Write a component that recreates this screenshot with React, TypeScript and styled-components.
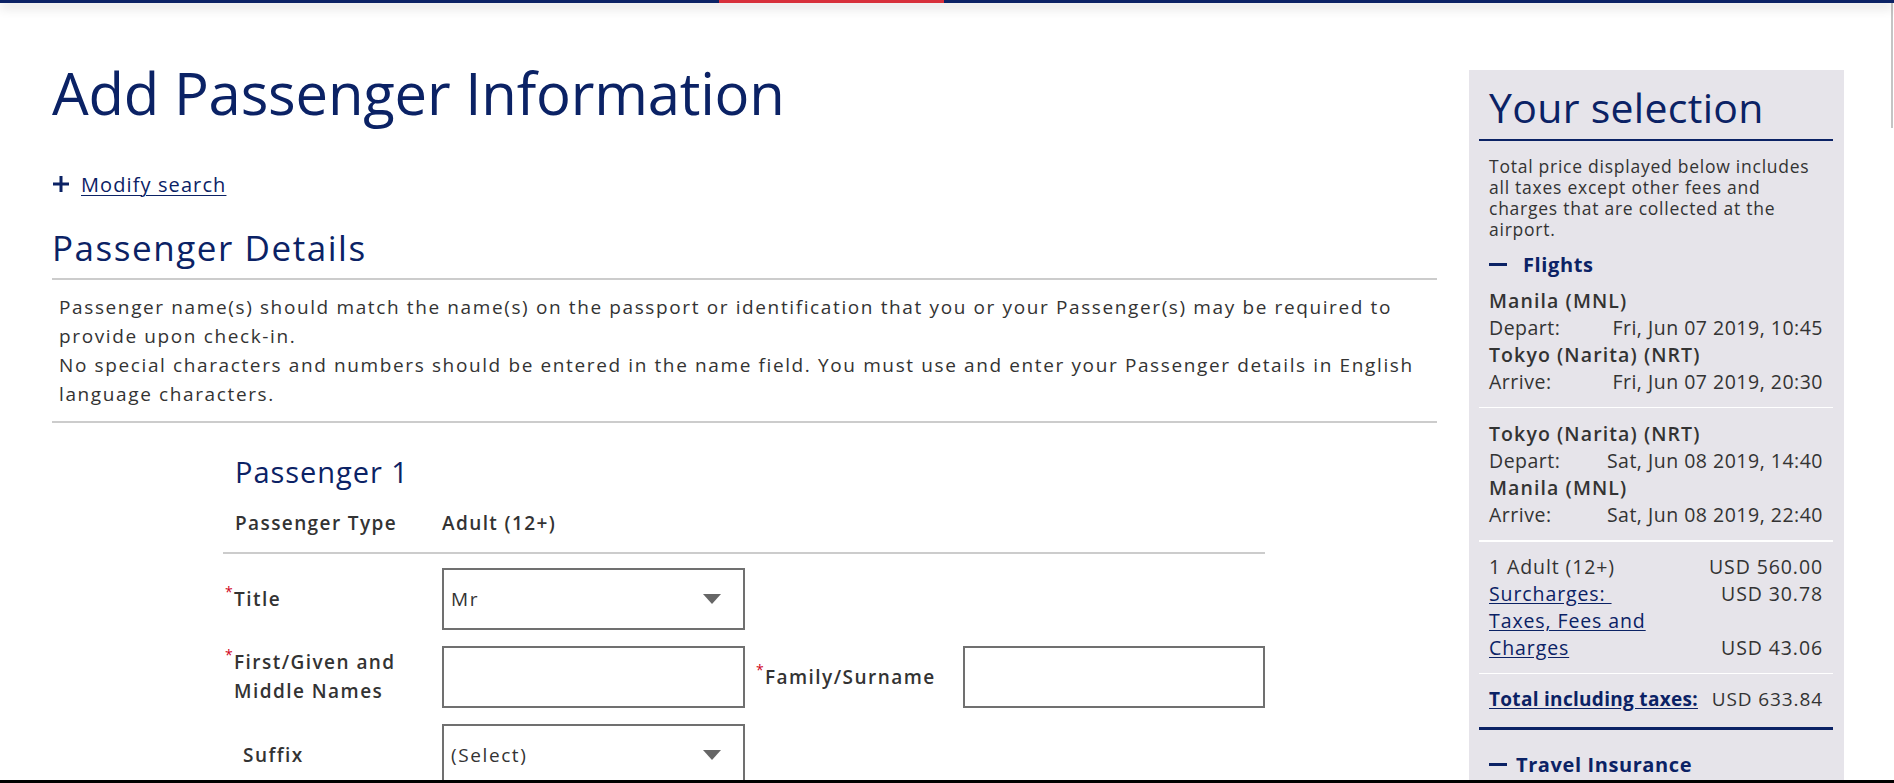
import React from "react";
import styled, { createGlobalStyle } from "styled-components";

const NAVY = "#0b2265";
const TEXT = "#333333";

const Global = createGlobalStyle`
  html, body { margin: 0; padding: 0; background: #fff; overflow: hidden; }
  body { font-family: "Open Sans", "Liberation Sans", sans-serif; color: ${TEXT}; }
  * { box-sizing: border-box; }
`;

const TopBar = styled.div`
  height: 3px;
  background: ${NAVY};
  display: flex;
  box-shadow: 0 3px 12px rgba(0, 0, 0, 0.3);
  position: relative;
  z-index: 2;
`;

const RedSegment = styled.div`
  margin-left: 719px;
  width: 225px;
  background: #d7303b;
`;

const Page = styled.div`
  display: flex;
  gap: 32px;
  padding: 67px 50px 0 52px;
`;

const Main = styled.main`
  width: 1385px;
  flex: none;
`;

const Heading = styled.h1`
  margin: 0;
  font-size: 58px;
  line-height: 46px;
  font-weight: 400;
  color: ${NAVY};
  letter-spacing: -0.2px;
`;

const ModifyRow = styled.div`
  display: flex;
  align-items: center;
  gap: 11px;
  margin-top: 56px;
  height: 24px;
`;

const PlusIcon = styled.svg`
  width: 18px;
  height: 18px;
  flex: none;
`;

const Link = styled.a`
  color: ${NAVY};
  font-size: 20px;
  text-decoration: underline;
  text-underline-offset: 3px;
  text-decoration-thickness: 1px;
  letter-spacing: 1.1px;
`;

const SectionTitle = styled.h2`
  margin: 32px 0 0;
  font-size: 35px;
  line-height: 40px;
  font-weight: 400;
  color: ${NAVY};
  letter-spacing: 1.55px;
  padding-bottom: 10px;
  border-bottom: 2px solid #cccccc;
`;

const Notice = styled.div`
  padding: 13px 7px 12px;
  font-size: 19px;
  line-height: 29px;
  letter-spacing: 1.62px;
  border-bottom: 2px solid #cccccc;
  color: ${TEXT};
`;

const NoticeLine = styled.p`
  margin: 0;
`;

const Form = styled.section`
  margin-left: 171px;
  width: 1042px;
`;

const PassengerTitle = styled.h3`
  margin: 32px 0 0 12px;
  font-size: 29px;
  line-height: 34px;
  font-weight: 400;
  color: ${NAVY};
  letter-spacing: 0.95px;
`;

const TypeRow = styled.div`
  display: flex;
  padding: 21px 0 16px 12px;
  border-bottom: 2px solid #cccccc;
  font-size: 19px;
  line-height: 26px;
  font-weight: 600;
  letter-spacing: 1.4px;
`;

const TypeLabel = styled.span`
  width: 207px;
`;

const FieldGrid = styled.div`
  display: grid;
  grid-template-columns: 219px 303px 218px 302px;
  grid-auto-rows: 62px;
  row-gap: 16px;
  margin-top: 14px;
  align-items: center;
`;

const Label = styled.label<{ $indent?: number; $hang?: number }>`
  font-size: 19px;
  line-height: 29px;
  font-weight: 600;
  letter-spacing: 1.45px;
  color: ${TEXT};
  padding-left: ${(p) => p.$indent ?? 11}px;
  text-indent: -${(p) => p.$hang ?? 9}px;
`;

const Req = styled.span`
  display: inline-block;
  width: 9px;
  text-indent: 0;
  color: #d0021b;
  font-size: 14px;
  font-weight: 400;
  vertical-align: top;
  line-height: 14px;
  letter-spacing: 0;
`;

const Box = styled.div`
  height: 62px;
  border: 2px solid #707070;
  background: #fff;
  display: flex;
  align-items: center;
  padding: 0 22px 0 7px;
  font-size: 19px;
  letter-spacing: 1.6px;
  color: ${TEXT};
`;

const BoxText = styled.span`
  flex: 1;
`;

const Caret = styled.span`
  width: 0;
  height: 0;
  border-left: 9px solid transparent;
  border-right: 9px solid transparent;
  border-top: 10px solid #666;
`;

const Sidebar = styled.aside`
  width: 375px;
  flex: none;
  background: #e6e4ea;
  padding: 0 11px 0 10px;
  height: 720px;
`;

const SideTitle = styled.h2`
  margin: 0;
  padding: 13px 10px 8px;
  font-size: 41px;
  line-height: 48px;
  font-weight: 400;
  color: ${NAVY};
  letter-spacing: 0.3px;
  border-bottom: 2px solid ${NAVY};
`;

const SideNote = styled.p`
  margin: 0;
  padding: 15px 10px 0;
  font-size: 17.5px;
  line-height: 21px;
  letter-spacing: 0.75px;
  color: ${TEXT};
`;

const Toggle = styled.div<{ $top: number; $gap: number }>`
  display: flex;
  align-items: center;
  gap: ${(p) => p.$gap}px;
  padding: ${(p) => p.$top}px 10px 0;
  font-size: 20px;
  line-height: 27px;
  font-weight: 700;
  color: ${NAVY};
  letter-spacing: 0.6px;
`;

const Dash = styled.span`
  width: 18px;
  height: 3px;
  background: ${NAVY};
`;

const Leg = styled.div<{ $border: number }>`
  padding: 9px 10px 12px;
  border-bottom: ${(p) => p.$border}px solid #ffffff;
  & + & {
    padding-top: 12px;
  }
`;

const City = styled.div`
  font-size: 19.5px;
  line-height: 27px;
  font-weight: 600;
  letter-spacing: 1.1px;
  color: ${TEXT};
`;

const InfoRow = styled.div`
  display: flex;
  justify-content: space-between;
  font-size: 19.5px;
  line-height: 27px;
  letter-spacing: 0.5px;
  color: ${TEXT};
`;

const PriceBlock = styled.div`
  padding: 11px 10px 12px;
  border-bottom: 1px solid #ffffff;
`;

const PriceRow = styled.div`
  display: flex;
  justify-content: space-between;
  align-items: flex-end;
  font-size: 19.5px;
  line-height: 27px;
  letter-spacing: 0.9px;
  color: ${TEXT};
`;

const PriceLink = styled.a`
  color: ${NAVY};
  text-decoration: underline;
  text-underline-offset: 2px;
  width: 170px;
`;

const TotalRow = styled.div`
  display: flex;
  justify-content: space-between;
  padding: 12px 10px 14px;
  font-size: 19px;
  line-height: 27px;
  letter-spacing: 0.3px;
  color: ${TEXT};
  border-bottom: 3px solid ${NAVY};
`;

const TotalLink = styled.a`
  color: ${NAVY};
  font-weight: 700;
  text-decoration: underline;
  text-underline-offset: 2px;
`;

const TotalValue = styled.span`
  letter-spacing: 0.9px;
`;

const ScrollThumb = styled.div`
  position: fixed;
  top: 0;
  right: 1px;
  width: 2px;
  height: 128px;
  background: #c4c4c4;
`;

const BottomEdge = styled.div`
  position: fixed;
  left: 0;
  right: 0;
  bottom: 0;
  height: 3px;
  background: #000;
`;

export default function App() {
  return (
    <>
      <Global />
      <TopBar>
        <RedSegment />
      </TopBar>
      <Page>
        <Main>
          <Heading>Add Passenger Information</Heading>
          <ModifyRow>
            <PlusIcon viewBox="0 0 18 18">
              <path d="M9 1v16M1 9h16" stroke={NAVY} strokeWidth="3" />
            </PlusIcon>
            <Link href="#">Modify search</Link>
          </ModifyRow>
          <SectionTitle>Passenger Details</SectionTitle>
          <Notice>
            <NoticeLine>
              Passenger name(s) should match the name(s) on the passport or identification that you or your Passenger(s) may be required to
              provide upon check-in.
            </NoticeLine>
            <NoticeLine>
              No special characters and numbers should be entered in the name field. You must use and enter your Passenger details in English
              language characters.
            </NoticeLine>
          </Notice>
          <Form>
            <PassengerTitle>Passenger 1</PassengerTitle>
            <TypeRow>
              <TypeLabel>Passenger Type</TypeLabel>
              <span>Adult (12+)</span>
            </TypeRow>
            <FieldGrid>
              <Label>
                <Req>*</Req>Title
              </Label>
              <Box>
                <BoxText>Mr</BoxText>
                <Caret />
              </Box>
              <span />
              <span />
              <Label>
                <Req>*</Req>First/Given and Middle Names
              </Label>
              <Box />
              <Label $indent={20}>
                <Req>*</Req>Family/Surname
              </Label>
              <Box />
              <Label $indent={20} $hang={0}>
                Suffix
              </Label>
              <Box>
                <BoxText>(Select)</BoxText>
                <Caret />
              </Box>
            </FieldGrid>
          </Form>
        </Main>
        <Sidebar>
          <SideTitle>Your selection</SideTitle>
          <SideNote>
            Total price displayed below includes all taxes except other fees and charges that are collected at the airport.
          </SideNote>
          <Toggle $top={11} $gap={16}>
            <Dash />
            Flights
          </Toggle>
          <Leg $border={1}>
            <City>Manila (MNL)</City>
            <InfoRow>
              <span>Depart:</span>
              <span>Fri, Jun 07 2019, 10:45</span>
            </InfoRow>
            <City>Tokyo (Narita) (NRT)</City>
            <InfoRow>
              <span>Arrive:</span>
              <span>Fri, Jun 07 2019, 20:30</span>
            </InfoRow>
          </Leg>
          <Leg $border={2}>
            <City>Tokyo (Narita) (NRT)</City>
            <InfoRow>
              <span>Depart:</span>
              <span>Sat, Jun 08 2019, 14:40</span>
            </InfoRow>
            <City>Manila (MNL)</City>
            <InfoRow>
              <span>Arrive:</span>
              <span>Sat, Jun 08 2019, 22:40</span>
            </InfoRow>
          </Leg>
          <PriceBlock>
            <PriceRow>
              <span>1 Adult (12+)</span>
              <span>USD 560.00</span>
            </PriceRow>
            <PriceRow>
              <PriceLink href="#">Surcharges:&nbsp;</PriceLink>
              <span>USD 30.78</span>
            </PriceRow>
            <PriceRow>
              <PriceLink href="#">Taxes, Fees and Charges</PriceLink>
              <span>USD 43.06</span>
            </PriceRow>
          </PriceBlock>
          <TotalRow>
            <TotalLink href="#">Total including taxes:</TotalLink>
            <TotalValue>USD 633.84</TotalValue>
          </TotalRow>
          <Toggle $top={21} $gap={9}>
            <Dash />
            Travel Insurance
          </Toggle>
        </Sidebar>
      </Page>
      <ScrollThumb />
      <BottomEdge />
    </>
  );
}
